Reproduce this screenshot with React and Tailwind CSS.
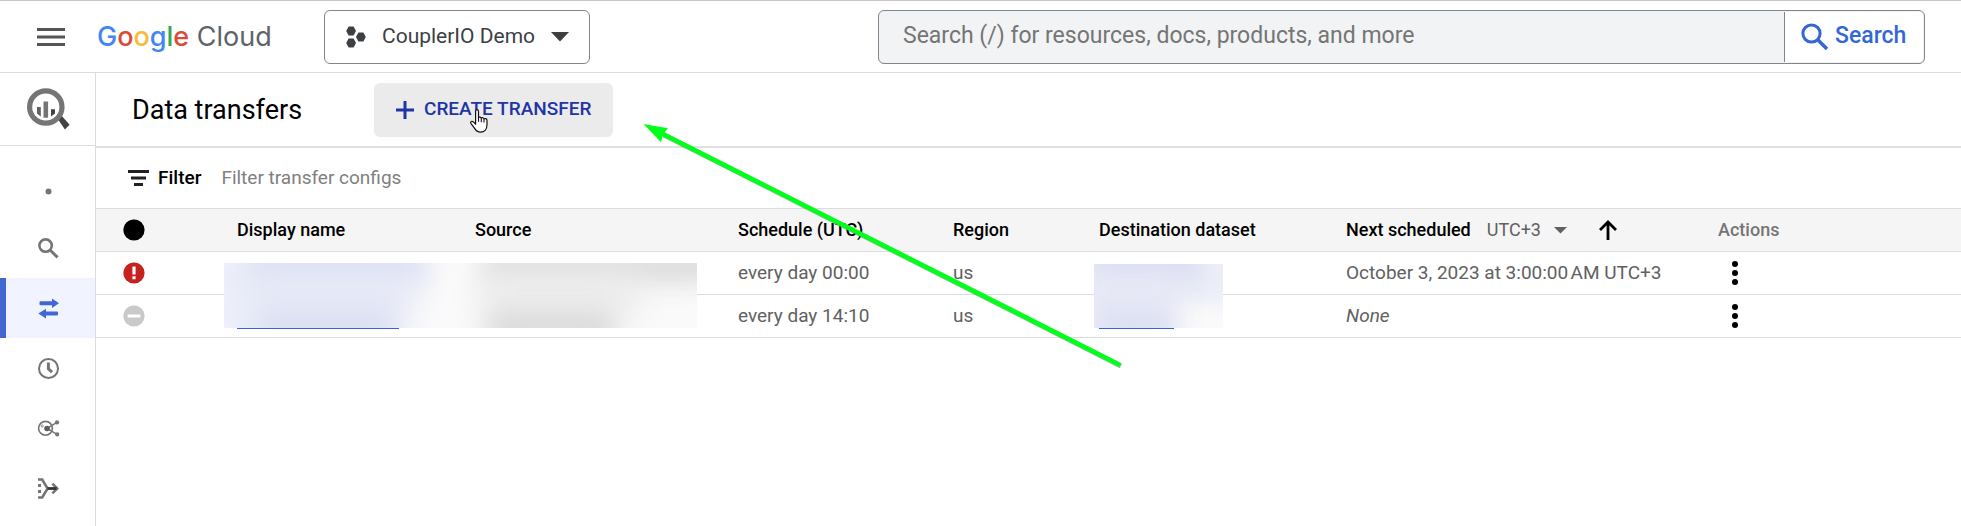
import React from 'react';

const navItems = [
  {
    label: 'Analysis',
    icon: <circle cx="12.5" cy="15.5" r="3" fill="currentColor" />,
  },
  {
    label: 'Search',
    icon: (
      <g fill="none" stroke="currentColor">
        <circle cx="9.6" cy="9.6" r="6.2" strokeWidth="2.6" />
        <path d="M14 14l7.6 7.4" strokeWidth="3" />
      </g>
    ),
  },
  {
    label: 'Data transfers',
    active: true,
    icon: (
      <path
        fill="currentColor"
        d="M4.5 5.2H16V2.4l7 4.9-7 4.8V9.3H4.5a1 1 0 0 1-1-1V6.2a1 1 0 0 1 1-1zM21 19.6H10v2.8l-7.7-4.8L10 12.8v2.7h11a1 1 0 0 1 1 1v2.1a1 1 0 0 1-1 1z"
      />
    ),
  },
  {
    label: 'Scheduled queries',
    icon: (
      <g fill="none" stroke="currentColor">
        <circle cx="12.5" cy="12.5" r="9.5" strokeWidth="2" />
        <path d="M12.4 6.6v6.2l3.6 3.4" strokeWidth="3" />
      </g>
    ),
  },
  {
    label: 'Analytics Hub',
    icon: (
      <g fill="none" stroke="currentColor">
        <circle cx="9.5" cy="12.3" r="6.9" strokeWidth="1.6" />
        <circle cx="6.2" cy="10" r="1.1" strokeWidth="0.8" />
        <path d="M11 12.3L21 6.4M11 12.3l10 6" strokeWidth="1.5" />
        <circle cx="11" cy="12.5" r="2.8" fill="#5c5c5c" stroke="none" />
        <circle cx="21" cy="6.4" r="2.1" fill="currentColor" stroke="none" />
        <circle cx="21.2" cy="18.4" r="2.1" fill="currentColor" stroke="none" />
      </g>
    ),
  },
  {
    label: 'Dataform',
    icon: (
      <g fill="none" stroke="currentColor">
        <path d="M2 3.5h4.2l5.4 9-5.4 9H2" strokeWidth="2.6" />
        <path d="M2 9.5h3M2 15.5h3" strokeWidth="3" />
        <path d="M16.4 7.6l4.8 4.9-4.8 4.9" strokeWidth="2.6" />
        <path d="M11.5 12.5h9" stroke="#333" strokeWidth="2.8" />
      </g>
    ),
  },
];

const transfers = [
  {
    status: 'error',
    schedule: 'every day 00:00',
    region: 'us',
    next: 'October 3, 2023 at 3:00:00\u202fAM UTC+3',
  },
  {
    status: 'disabled',
    schedule: 'every day 14:10',
    region: 'us',
    next: null,
  },
];

const StatusIcon = ({ status }) => (
  <svg className="block h-[22px] w-[22px]" viewBox="0 0 22 22" role="img" aria-label={status}>
    {status === 'any' && <circle cx="11" cy="11" r="10.6" fill="#000" />}
    {status === 'error' && (
      <>
        <circle cx="11" cy="11" r="10.6" fill="#c5221f" />
        <path d="M9.4 4.6h3.2v8H9.4zM9.4 14.2h3.2v3H9.4z" fill="#fff" />
      </>
    )}
    {status === 'disabled' && (
      <>
        <circle cx="11" cy="11" r="10.6" fill="#c9c9c9" />
        <path d="M4.6 9.5h12.8v3H4.6z" fill="#fff" />
      </>
    )}
  </svg>
);

const Header = () => (
  <header className="flex h-[73px] items-center border-t border-b border-t-[#c8c8c8] border-b-[#dadce0] pr-9">
    <button aria-label="Main menu" className="ml-[37px]">
      <svg className="block h-[18px] w-7" viewBox="0 0 28 18">
        <path d="M0 1.5h28M0 9h28M0 16.5h28" stroke="#555" strokeWidth="3" />
      </svg>
    </button>
    <a href="#" className="ml-8 w-[227px] font-['Inter',sans-serif] text-[27px] leading-9 whitespace-nowrap text-[#5f6368]">
      <span className="font-medium">
        <span className="text-[#4285f4]">G</span>
        <span className="text-[#db4a39]">o</span>
        <span className="text-[#f4bd38]">o</span>
        <span className="text-[#4285f4]">g</span>
        <span className="text-[#34a853]">l</span>
        <span className="text-[#db4a39]">e</span>
      </span>{' '}
      Cloud
    </a>
    <button className="flex h-[54px] w-[266px] shrink-0 items-center rounded-md border border-[#80868b] pl-[21px] text-[21px] text-[#3c4043]">
      <svg className="h-[22px] w-5" viewBox="0 0 20 22" fill="#3c4043">
        <path d="M2.6.5h5L10 5 7.6 9.5h-5L.2 5zM2.6 12.5h5L10 17l-2.4 4.5h-5L.2 17zM12.4 6.4h5l2.4 4.5-2.4 4.5h-5L10 10.9z" />
      </svg>
      <span className="ml-4">CouplerIO Demo</span>
      <svg className="ml-4 h-[10px] w-[18px]" viewBox="0 0 18 10">
        <path d="M0 0h18l-9 9.5z" fill="#3c4043" />
      </svg>
    </button>
    <form className="ml-[288px] flex h-[54px] flex-1 rounded-md border border-[#80868b] bg-[#f1f3f4] py-px pr-px">
      <input
        type="text"
        aria-label="Search"
        placeholder="Search (/) for resources, docs, products, and more"
        className="min-w-0 flex-1 bg-transparent pl-6 text-[23px] placeholder:text-[#757575]"
      />
      <button
        type="button"
        className="flex w-[139px] items-center rounded-r-sm border-l border-[#80868b] bg-white pl-4 text-[23px] font-medium text-[#3367d6]"
      >
        <svg className="h-7 w-7" viewBox="0 0 28 28" fill="none" stroke="#3367d6">
          <circle cx="10.5" cy="10.5" r="8.6" strokeWidth="3" />
          <path d="M16.5 16.5l9.5 9.5" strokeWidth="3.6" />
        </svg>
        <span className="ml-[6px]">Search</span>
      </button>
    </form>
  </header>
);

const Sidebar = () => (
  <aside className="w-24 shrink-0 border-r border-[#dadce0]">
    <div className="flex h-[73px] items-center justify-center border-b border-[#dadce0]">
      <svg className="h-11 w-11" viewBox="26 87 44 44" role="img" aria-label="BigQuery">
        <path d="M57.5 118.5l3.5-3.5 8.6 9.7-4.7 4.8z" fill="#424242" />
        <circle cx="45.8" cy="107" r="16.2" fill="#fff" stroke="#757575" strokeWidth="5.2" />
        <path d="M37 107h3.8v9.6l-3.8-3z" fill="#616161" />
        <path d="M43.5 101.5h4.6v16.2h-4.6z" fill="#757575" />
        <path d="M51 109.2h4v4.2l-4 3z" fill="#424242" />
      </svg>
    </div>
    <nav className="pt-3">
      {navItems.map((item) => (
        <a
          key={item.label}
          href="#"
          aria-label={item.label}
          className={
            item.active
              ? 'flex h-15 items-center justify-center bg-[#f1f4fe] text-[#4267d2] shadow-[inset_6px_0_0_#4267d2]'
              : 'flex h-15 items-center justify-center text-[#757575]'
          }
        >
          <svg className="h-6 w-6" viewBox="0 0 24 24">{item.icon}</svg>
        </a>
      ))}
    </nav>
  </aside>
);

const HandCursor = () => (
  <svg className="pointer-events-none absolute top-[26px] left-24 h-6 w-[18px]" viewBox="0 0 18 24">
    <path
      d="M5.6 2.4c0-1 .6-1.7 1.4-1.7s1.5.7 1.5 1.7v6.2c.3-.7 2.6-.7 2.8.6.5-.8 2.5-.6 2.700.7.7-.7 3-.5 3 1.5v4.200c0 4.400-2.400 7.600-6.400 7.600-3.300 0-4.700-1.500-6-3.800L.9 14.300c-.6-1.100.2-2.300 1.400-2 1 .2 2.200 1.400 3.300 2.900z"
      fill="#fff"
      stroke="#111"
      strokeWidth="1.2"
      strokeLinejoin="round"
    />
    <path d="M8.5 8.6v4.2M11.3 9.2v4M14 10v3.5" stroke="#111" strokeWidth="1.1" />
  </svg>
);

// Redacted names, drawn over both rows
const NameRedaction = () => (
  <div className="absolute top-[11px] left-[3px] h-[65px] w-[473px] overflow-hidden bg-[#fafafb]">
    <div className="absolute -top-4 -left-4 h-24 w-[190px] bg-[#eceffa] blur-md" />
    <div className="absolute -top-3 left-6 h-8 w-[180px] rounded-xl bg-[#d9def2] blur-md" />
    <div className="absolute top-3 left-6 h-10 w-[168px] bg-[#e6e9f6] blur-lg" />
    <div className="absolute top-12 left-8 h-8 w-[140px] rounded-xl bg-[#d9def2] blur-md" />
    <div className="absolute -top-3 left-[258px] h-8 w-[240px] rounded-xl bg-[#dcdcdc] blur-md" />
    <div className="absolute top-3 left-[256px] h-10 w-[160px] bg-[#ebebeb] blur-lg" />
    <div className="absolute top-12 left-[262px] h-8 w-[130px] rounded-xl bg-[#d8d8d8] blur-md" />
  </div>
);

const DatasetRedaction = () => (
  <div className="absolute top-3 left-[11px] h-16 w-[129px] overflow-hidden bg-[#fafafb]">
    <div className="absolute -top-4 -left-4 h-14 w-[170px] bg-[#eceef8] blur-sm" />
    <div className="absolute -top-4 -left-1 h-8 w-[110px] bg-[#d8dcf0] blur-md" />
    <div className="absolute top-3 -left-3 h-16 w-[96px] bg-[#e6e8f6] blur-md" />
    <div className="absolute top-13 left-1 h-6 w-[72px] bg-[#d9ddf1] blur-md" />
  </div>
);

const TransfersTable = () => (
  <table className="w-full table-fixed border-collapse text-left text-[18px] leading-6">
    <colgroup>
      <col className="w-[125px]" />
      <col className="w-[238px]" />
      <col className="w-[263px]" />
      <col className="w-[215px]" />
      <col className="w-[146px]" />
      <col className="w-[247px]" />
      <col className="w-[372px]" />
      <col />
    </colgroup>
    <thead>
      <tr className="h-[43px] border-y border-[#dcdcdc] bg-[#f5f5f5] text-black [&>th]:p-0 [&>th]:pl-4 [&>th]:font-medium">
        <th>
          <div className="pl-[11px]">
            <StatusIcon status="any" />
          </div>
        </th>
        <th>Display name</th>
        <th>Source</th>
        <th>Schedule (UTC)</th>
        <th>Region</th>
        <th>Destination dataset</th>
        <th>
          <div className="flex items-center">
            <label htmlFor="timezone">Next scheduled</label>
            <div className="relative ml-4">
              <select id="timezone" className="w-20 appearance-none bg-transparent font-normal text-[#616161]">
                <option>UTC+3</option>
              </select>
              <svg className="pointer-events-none absolute top-[9px] right-0 h-[7px] w-[13px]" viewBox="0 0 13 7">
                <path d="M0 0h13L6.5 6.5z" fill="#616161" />
              </svg>
            </div>
            <button aria-label="Sort ascending" className="ml-8">
              <svg className="block h-5 w-[18px]" viewBox="0 0 18 20" fill="none" stroke="#000">
                <path d="M9 20V2M1 10l8-8 8 8" strokeWidth="2.8" />
              </svg>
            </button>
          </div>
        </th>
        <th className="text-[#757575]">Actions</th>
      </tr>
    </thead>
    <tbody className="text-[19px] text-[#616161]">
      {transfers.map((t, i) => (
        <tr key={t.schedule} className="h-[43px] border-b border-[#dcdcdc] [&>td]:p-0 [&>td]:pl-4">
          <td>
            <div className="pl-[11px]">
              <StatusIcon status={t.status} />
            </div>
          </td>
          <td className="relative align-top">
            {i === 0 ? (
              <NameRedaction />
            ) : (
              <a href="#" aria-label="Transfer" className="block h-[34px] w-[162px] border-b border-[#3367d6]" />
            )}
          </td>
          <td />
          <td>{t.schedule}</td>
          <td>{t.region}</td>
          <td className="relative align-top">
            {i === 0 ? (
              <DatasetRedaction />
            ) : (
              <a href="#" aria-label="Dataset" className="block h-[34px] w-[75px] border-b border-[#3367d6]" />
            )}
          </td>
          <td>{t.next || <i>None</i>}</td>
          <td>
            <button aria-label="Actions" className="block pl-[14px]">
              <svg className="h-6 w-[6px]" viewBox="0 0 6 24">
                <circle cx="3" cy="3" r="3" />
                <circle cx="3" cy="12" r="3" />
                <circle cx="3" cy="21" r="3" />
              </svg>
            </button>
          </td>
        </tr>
      ))}
    </tbody>
  </table>
);

const App = () => (
  <div className="relative flex min-h-screen flex-col bg-white font-['Roboto',sans-serif]">
    <Header />
    <div className="flex flex-1">
      <Sidebar />
      <main className="min-w-0 flex-1">
        <div className="flex h-[75px] items-center border-b-2 border-[#e0e0e0] pl-9">
          <h1 className="w-[242px] text-[27px] leading-9 text-black">Data transfers</h1>
          <button className="relative flex h-[54px] w-[239px] items-center rounded-md bg-[#ebebeb] pl-[22px] text-[19px] font-medium text-[#1f35a5]">
            <svg className="h-[18px] w-[18px]" viewBox="0 0 18 18">
              <path d="M9 0v18M0 9h18" stroke="#1f35a5" strokeWidth="3" />
            </svg>
            <span className="ml-[10px]">CREATE TRANSFER</span>
            <HandCursor />
          </button>
        </div>

        <div className="flex h-[60px] items-center pl-8 text-[19px]">
          <svg className="h-4 w-[21px]" viewBox="0 0 21 16">
            <path d="M0 1.5h21M3 8h15M6 14.5h9" stroke="#212121" strokeWidth="2.8" />
          </svg>
          <label htmlFor="filter" className="ml-[9px] font-medium text-black">Filter</label>
          <input
            id="filter"
            type="text"
            placeholder="Filter transfer configs"
            className="ml-5 flex-1 placeholder:text-[#808080]"
          />
        </div>

        <TransfersTable />
      </main>
    </div>

    {/* Callout arrow */}
    <svg
      className="pointer-events-none absolute top-[120px] left-[640px] h-[252px] w-[486px]"
      viewBox="640 120 486 252"
    >
      <path d="M663 134.5L1121 366" stroke="#5b8a5b" strokeWidth="5" opacity="0.6" />
      <path d="M662 133.5L1120 365" stroke="#00ff1a" strokeWidth="4.6" />
      <path d="M643.5 124l24.5 4.3-5 5.7-2 8.2z" fill="#00ff1a" />
    </svg>
  </div>
);

export default App;
